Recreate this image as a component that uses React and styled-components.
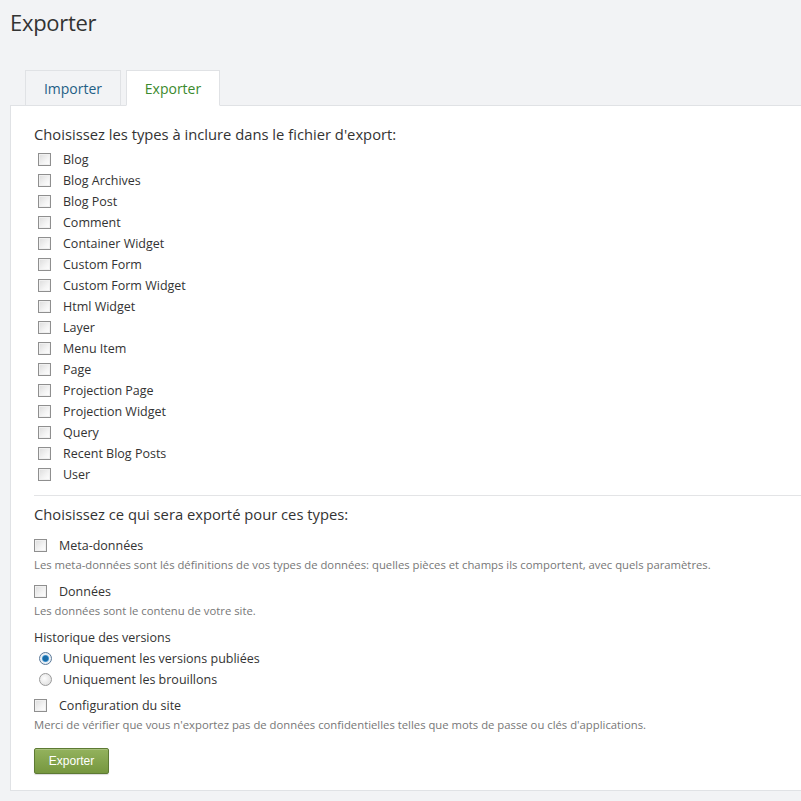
import React from "react";
import styled, { createGlobalStyle } from "styled-components";

const Global = createGlobalStyle`
  html, body { margin: 0; padding: 0; background: #f2f3f5; }
  body { font-family: "Open Sans", "Noto Sans", sans-serif; color: #333; }
  * { box-sizing: border-box; }
`;

const Page = styled.div`
  padding: 0 0 10px 10px;
  min-height: 801px;
`;

const Title = styled.h1`
  margin: 0;
  padding-top: 7px;
  height: 70px;
  font-size: 22px;
  font-weight: 400;
  color: #333;
  letter-spacing: -0.3px;
`;

const Tabs = styled.div`
  display: flex;
  gap: 5px;
  padding-left: 15px;
  margin-bottom: -1px;
  position: relative;
  z-index: 1;
`;

const Tab = styled.div`
  height: 36px;
  width: ${(p) => p.$w}px;
  border: 1px solid #e0e2e5;
  border-bottom: ${(p) => (p.$active ? "1px solid #fff" : "1px solid #e0e2e5")};
  background: ${(p) => (p.$active ? "#fff" : "#f2f3f5")};
  color: ${(p) => (p.$active ? "#3b8a2d" : "#1f5f86")};
  font-size: 14px;
  display: flex;
  align-items: center;
  justify-content: center;
  padding-top: 1px;
`;

const Panel = styled.div`
  background: #fff;
  border: 1px solid #e0e2e5;
  border-right: none;
  padding: 17px 0 16px 23px;
`;

const Heading = styled.div`
  font-size: 14.75px;
  line-height: 22px;
  font-weight: 400;
  color: #333;
  margin-bottom: ${(p) => p.$mb || 0}px;
`;

const TypeList = styled.div`
  display: flex;
  flex-direction: column;
  padding-left: 4px;
`;

const TypeRow = styled.label`
  display: flex;
  align-items: center;
  height: 21px;
  font-size: 12.5px;
  color: #333;
`;

const Box = styled.span`
  width: 13px;
  height: 13px;
  border: 1px solid #8f8f8f;
  background: linear-gradient(135deg, #dcdcdc 0%, #f4f4f4 60%, #fff 100%);
  box-shadow: inset 0 0 0 1px #f0f0f0;
  margin-right: ${(p) => p.$gap}px;
  flex-shrink: 0;
`;

const Radio = styled.span`
  width: 13px;
  height: 13px;
  border-radius: 50%;
  border: 1px solid ${(p) => (p.$checked ? "#5c7a99" : "#9a9a9a")};
  background: ${(p) =>
    p.$checked
      ? "radial-gradient(circle, #1a6ca8 0 2.5px, #3d93cf 3px, #e8eef4 4px)"
      : "radial-gradient(circle at 40% 40%, #fdfdfd 0, #d9d9d9 100%)"};
  margin: 0 11px 0 5px;
  flex-shrink: 0;
`;

const Separator = styled.hr`
  border: none;
  border-top: 1px solid #e3e4e6;
  margin: 10px 0 7px 0;
`;

const OptionRow = styled.label`
  display: flex;
  align-items: center;
  height: 20px;
  font-size: 12.5px;
  color: #333;
  margin-top: ${(p) => p.$mt || 0}px;
`;

const Hint = styled.div`
  font-size: 11.3px;
  line-height: 16px;
  color: #777;
  margin-top: 2px;
`;

const SubHeading = styled.div`
  font-size: 12.5px;
  line-height: 20px;
  color: #333;
  margin-top: 9px;
`;

const RadioRow = styled.label`
  display: flex;
  align-items: center;
  height: 21px;
  font-size: 12.5px;
  color: #333;
`;

const Button = styled.button`
  margin-top: 15px;
  width: 75px;
  height: 26px;
  border: 1px solid #5d7a33;
  border-radius: 2px;
  background: linear-gradient(#93b25d, #76973f);
  color: #fff;
  font-family: "Liberation Sans", Arial, sans-serif;
  font-size: 12px;
  box-shadow: 0 1px 1px rgba(0, 0, 0, 0.15), inset 0 1px 0 rgba(255,255,255,0.2);
  padding: 0;
`;

const types = [
  "Blog",
  "Blog Archives",
  "Blog Post",
  "Comment",
  "Container Widget",
  "Custom Form",
  "Custom Form Widget",
  "Html Widget",
  "Layer",
  "Menu Item",
  "Page",
  "Projection Page",
  "Projection Widget",
  "Query",
  "Recent Blog Posts",
  "User",
];

export default function App() {
  return (
    <Page>
      <Global />
      <Title>Exporter</Title>
      <Tabs>
        <Tab $w={96}>Importer</Tab>
        <Tab $w={94} $active>Exporter</Tab>
      </Tabs>
      <Panel>
        <Heading $mb={4}>Choisissez les types à inclure dans le fichier d'export:</Heading>
        <TypeList>
          {types.map((t) => (
            <TypeRow key={t}>
              <Box $gap={12} />
              {t}
            </TypeRow>
          ))}
        </TypeList>
        <Separator />
        <Heading>Choisissez ce qui sera exporté pour ces types:</Heading>
        <OptionRow $mt={10}>
          <Box $gap={12} />
          Meta-données
        </OptionRow>
        <Hint>
          Les meta-données sont lés définitions de vos types de données: quelles pièces et champs ils comportent, avec quels paramètres.
        </Hint>
        <OptionRow $mt={8}>
          <Box $gap={12} />
          Données
        </OptionRow>
        <Hint>Les données sont le contenu de votre site.</Hint>
        <SubHeading>Historique des versions</SubHeading>
        <RadioRow>
          <Radio $checked />
          Uniquement les versions publiées
        </RadioRow>
        <RadioRow>
          <Radio />
          Uniquement les brouillons
        </RadioRow>
        <OptionRow $mt={5}>
          <Box $gap={12} />
          Configuration du site
        </OptionRow>
        <Hint>
          Merci de vérifier que vous n'exportez pas de données confidentielles telles que mots de passe ou clés d'applications.
        </Hint>
        <Button>Exporter</Button>
      </Panel>
    </Page>
  );
}
